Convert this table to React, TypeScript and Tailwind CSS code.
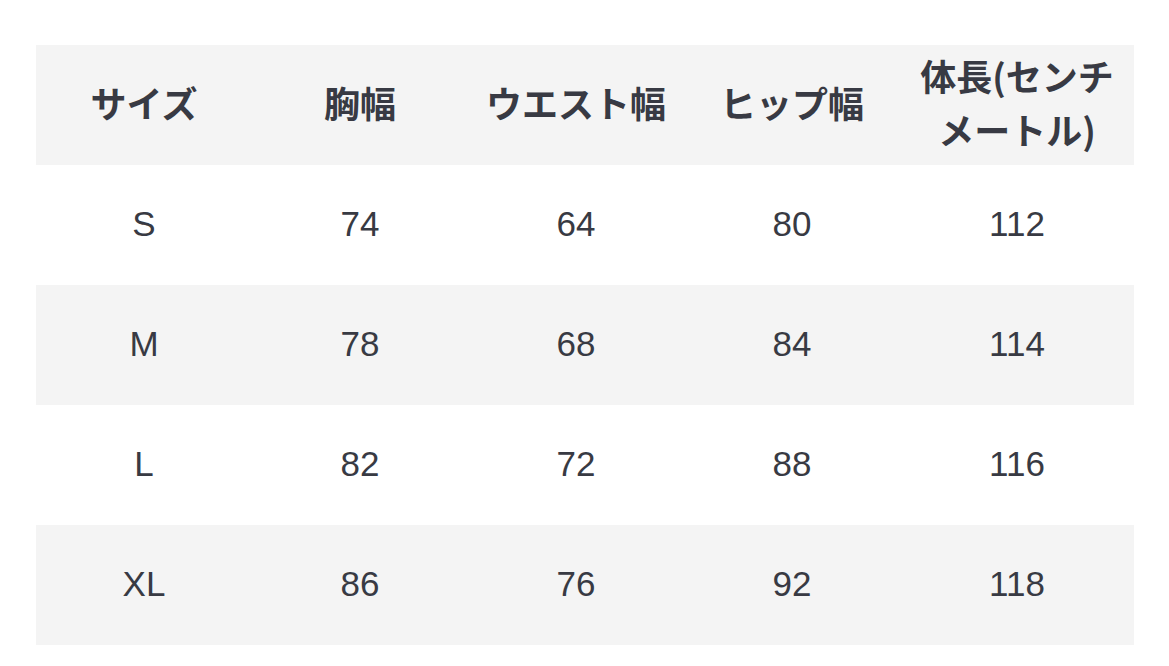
import React from "react";

const headers = ["サイズ", "胸幅", "ウエスト幅", "ヒップ幅", "体長(センチメートル)"];
const rows = [
  ["S", "74", "64", "80", "112"],
  ["M", "78", "68", "84", "114"],
  ["L", "82", "72", "88", "116"],
  ["XL", "86", "76", "92", "118"],
];

export default function App() {
  return (
    <div
      className="min-h-[666px] w-full bg-white pt-[45px] pl-[36px] text-[#383a43]"
      style={{ fontFamily: '"Liberation Sans", "Noto Sans CJK JP", sans-serif' }}
    >
      <div className="w-[1098px]">
        <div className="grid h-[120px] grid-cols-[216px_216px_216px_216px_1fr] bg-[#f4f4f4]">
          {headers.map((h) => (
            <div
              key={h}
              className="flex items-center justify-center px-[14px] pb-[6px] text-center text-[36px] font-bold leading-[54px]"
              style={{ fontFamily: '"Noto Sans CJK JP", "Liberation Sans", sans-serif' }}
            >
              {h}
            </div>
          ))}
        </div>
        {rows.map((r, i) => (
          <div
            key={r[0]}
            className={
              "grid h-[120px] grid-cols-[216px_216px_216px_216px_1fr] " +
              (i % 2 === 1 ? "bg-[#f4f4f4]" : "bg-white")
            }
          >
            {r.map((c, j) => (
              <div key={j} className="flex items-center justify-center px-4 pb-[2px] text-[35px]">
                {c}
              </div>
            ))}
          </div>
        ))}
      </div>
    </div>
  );
}
